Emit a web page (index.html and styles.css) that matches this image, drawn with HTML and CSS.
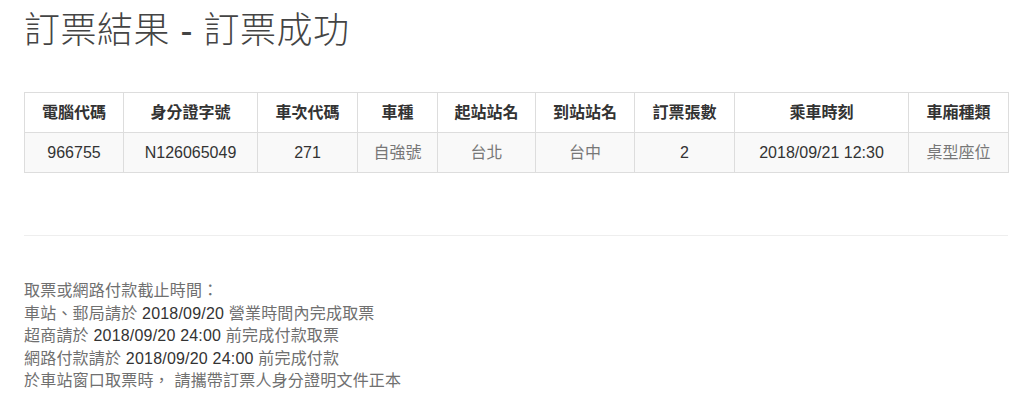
FILE: index.html
```html
<!DOCTYPE html>
<html lang="zh-Hant">
<head>
<meta charset="utf-8">
<title>訂票結果</title>
<link rel="stylesheet" href="styles.css">
</head>
<body>
<main class="page">
  <h1 class="title">訂票結果 - 訂票成功</h1>
  <table class="result">
    <colgroup>
      <col class="c99"><col class="c134"><col class="c100"><col class="c80"><col class="c98"><col class="c99"><col class="c100"><col class="c174"><col class="c100">
    </colgroup>
    <thead>
      <tr>
        <th>電腦代碼</th><th>身分證字號</th><th>車次代碼</th><th>車種</th><th>起站站名</th><th>到站站名</th><th>訂票張數</th><th>乘車時刻</th><th>車廂種類</th>
      </tr>
    </thead>
    <tbody>
      <tr>
        <td>966755</td><td>N126065049</td><td>271</td><td class="cjk">自強號</td><td class="cjk">台北</td><td class="cjk">台中</td><td>2</td><td>2018/09/21 12:30</td><td class="cjk">桌型座位</td>
      </tr>
    </tbody>
  </table>
  <hr class="divider">
  <div class="notes">
    <p>取票或網路付款截止時間：</p>
    <p>車站、郵局請於 <span class="num">2018/09/20</span> 營業時間內完成取票</p>
    <p>超商請於 <span class="num">2018/09/20 24:00</span> 前完成付款取票</p>
    <p>網路付款請於 <span class="num">2018/09/20 24:00</span> 前完成付款</p>
    <p>於車站窗口取票時， 請攜帶訂票人身分證明文件正本</p>
  </div>
</main>
</body>
</html>
```
FILE: styles.css
```css
html, body {
  margin: 0;
  padding: 0;
  background: #ffffff;
}
body {
  font-family: "Liberation Sans", "Noto Sans CJK TC", sans-serif;
  font-size: 16px;
  color: #555;
}
.page {
  padding: 0 16px 0 24px;
}
.title {
  margin: 11px 0 0 0;
  font-size: 36px;
  line-height: 40px;
  font-weight: 300;
  letter-spacing: 0.5px;
  color: #444;
}
.result {
  margin-top: 41px;
  width: 984px;
  table-layout: fixed;
  border-collapse: collapse;
}
.c99 { width: 99px; }
.c134 { width: 134px; }
.c100 { width: 100px; }
.c80 { width: 80px; }
.c98 { width: 98px; }
.c174 { width: 174px; }
.result th,
.result td {
  border: 1px solid #dddddd;
  padding: 8px 4px;
  line-height: 23px;
  text-align: center;
  font-size: 16px;
  white-space: nowrap;
}
.result th {
  font-weight: bold;
  color: #333;
}
.result td {
  background: #f9f9f9;
  color: #333;
}
.result td.cjk {
  color: #777;
}
.divider {
  margin: 62px 0 0 0;
  border: 0;
  border-top: 1px solid #eeeeee;
  height: 0;
}
.notes {
  margin-top: 44px;
}
.notes p {
  margin: 0;
  line-height: 22.5px;
  letter-spacing: 0.2px;
  color: #707070;
}
.notes .num {
  color: #333;
}
```
